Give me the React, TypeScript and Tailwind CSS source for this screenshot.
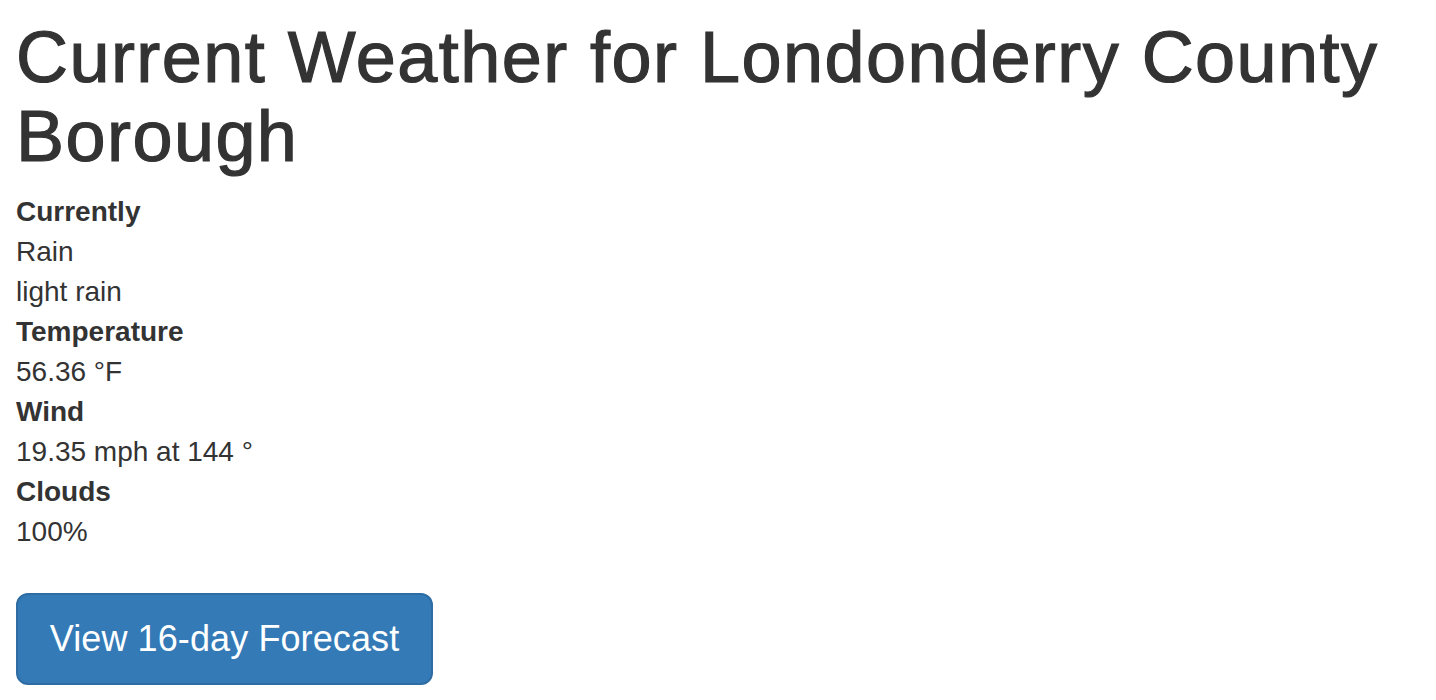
export default function App() {
  const rows: [string, string[]][] = [
    ["Currently", ["Rain", "light rain"]],
    ["Temperature", ["56.36 °F"]],
    ["Wind", ["19.35 mph at 144 °"]],
    ["Clouds", ["100%"]],
  ];

  return (
    <div className="min-h-screen bg-white px-[16px] text-[#333333] font-['Liberation_Sans',Arial,sans-serif]">
      <h1 className="pt-[18px] mb-[16px] text-[72px] leading-[79px] font-normal tracking-[1.45px] [-webkit-text-stroke:1.2px_#333333]">
        Current Weather for Londonderry County Borough
      </h1>
      <dl className="text-[28px] leading-[40px] mb-[41px]">
        {rows.map(([label, values]) => (
          <div key={label}>
            <dt className="font-bold">{label}</dt>
            {values.map((v) => (
              <dd key={v}>{v}</dd>
            ))}
          </div>
        ))}
      </dl>
      <button className="h-[92px] w-[417px] rounded-[12px] border-2 border-[#2e6da4] bg-[#337ab7] text-white text-[36px] leading-[48px] tracking-[0.1px]">
        View 16-day Forecast
      </button>
    </div>
  );
}
